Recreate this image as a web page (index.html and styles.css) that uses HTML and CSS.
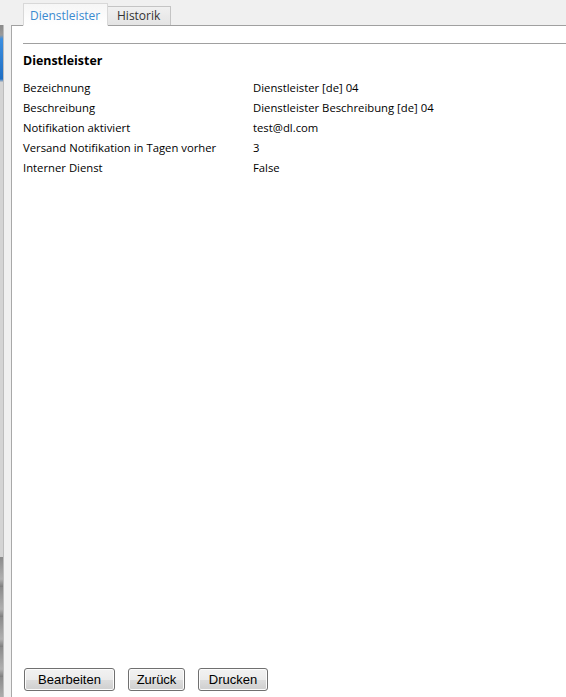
FILE: index.html
```html
<!DOCTYPE html>
<html lang="de">
<head>
<meta charset="utf-8">
<title>Dienstleister</title>
<link rel="stylesheet" href="styles.css">
</head>
<body>
<div class="app">
  <div class="tabbar">
    <div class="tab active">Dienstleister</div>
    <div class="tab">Historik</div>
  </div>
  <div class="main">
    <div class="side">
      <div class="side-blue"></div>
      <div class="side-mid"></div>
      <div class="side-dark"></div>
    </div>
    <div class="gutter"></div>
    <div class="panel">
      <div class="rule"></div>
      <h2 class="title">Dienstleister</h2>
      <div class="grid">
        <div class="label">Bezeichnung</div><div class="value">Dienstleister [de] 04</div>
        <div class="label">Beschreibung</div><div class="value">Dienstleister Beschreibung [de] 04</div>
        <div class="label">Notifikation aktiviert</div><div class="value">test@dl.com</div>
        <div class="label">Versand Notifikation in Tagen vorher</div><div class="value">3</div>
        <div class="label">Interner Dienst</div><div class="value">False</div>
      </div>
      <div class="buttons">
        <button class="btn b1">Bearbeiten</button>
        <button class="btn b2">Zurück</button>
        <button class="btn b3">Drucken</button>
      </div>
    </div>
  </div>
</div>
</body>
</html>
```
FILE: styles.css
```css
html, body {
  margin: 0;
  padding: 0;
  height: 100%;
  background: #f0f0f0;
}
body {
  font-family: "Open Sans", "Noto Sans", sans-serif;
  font-size: 11.3px;
  color: #000;
  overflow: hidden;
}
.app {
  display: flex;
  flex-direction: column;
  height: 697px;
}
.tabbar {
  height: 25px;
  display: flex;
  align-items: flex-end;
  padding-left: 23px;
  background: #f0f0f0;
  position: relative;
  z-index: 2;
}
.tab {
  box-sizing: border-box;
  height: 19px;
  line-height: 18px;
  font-size: 12px;
  color: #333;
  background: linear-gradient(#f0f0f0, #e4e4e4);
  border: 1px solid #c4c4c4;
  border-bottom: none;
  border-left: none;
}
.tab.active {
  height: 23px;
  width: 85px;
  padding: 0 0 0 6px;
  line-height: 23px;
  color: #3a8ad0;
  background: linear-gradient(#f6f6f6, #ffffff);
  border: 1px solid #d8d8d8;
  border-bottom: 1px solid #fff;
  margin-bottom: -1px;
}
.tab:not(.active) {
  width: 63px;
  padding-left: 9px;
}
.main {
  flex: 1;
  display: flex;
  min-height: 0;
}
.side {
  width: 4px;
  display: flex;
  flex-direction: column;
  background: #d4d4d4;
  border-right: 1px solid #bdbdbd;
  box-sizing: border-box;
}
.side-blue {
  height: 57px;
  background: linear-gradient(#8a8a8a 0, #9a9a9a 10px, #3b8ee0 14px, #1f6fc4 54px, #c8c8c8 57px);
}
.side-mid {
  flex: 1;
}
.side-dark {
  height: 140px;
  background: repeating-linear-gradient(#8a8a8a 0, #b0b0b0 22px, #7c7c7c 30px);
}
.gutter {
  width: 7px;
  background: #f0f0f0;
}
.panel {
  flex: 1;
  background: #fff;
  border-left: 1px solid #a8a8a8;
  border-top: 1px solid #a0a0a0;
  display: flex;
  flex-direction: column;
  padding-left: 11px;
  min-width: 0;
}
.rule {
  margin-top: 17px;
  height: 0;
  border-top: 1px solid #a0a0a0;
}
.title {
  margin: 8px 0 0 0;
  font-size: 12.4px;
  font-weight: bold;
  line-height: 18px;
  height: 18px;
}
.grid {
  margin-top: 8px;
  display: grid;
  grid-template-columns: 230px 1fr;
  grid-auto-rows: 20px;
  line-height: 20px;
}
.buttons {
  margin-top: auto;
  display: flex;
  gap: 13px;
  padding-left: 1px;
  margin-bottom: 6px;
}
.btn {
  font-family: "Liberation Sans", Arial, sans-serif;
  font-size: 13px;
  height: 23px;
  padding: 0 0 1px 0;
  color: #000;
  border: 1px solid #707070;
  border-radius: 3px;
  background: linear-gradient(#f2f2f2 0, #ebebeb 50%, #dddddd 51%, #cfcfcf 100%);
  box-shadow: inset 0 0 0 1px #fcfcfc;
}
.b1 { width: 91px; }
.b2 { width: 57px; }
.b3 { width: 70px; }
```
